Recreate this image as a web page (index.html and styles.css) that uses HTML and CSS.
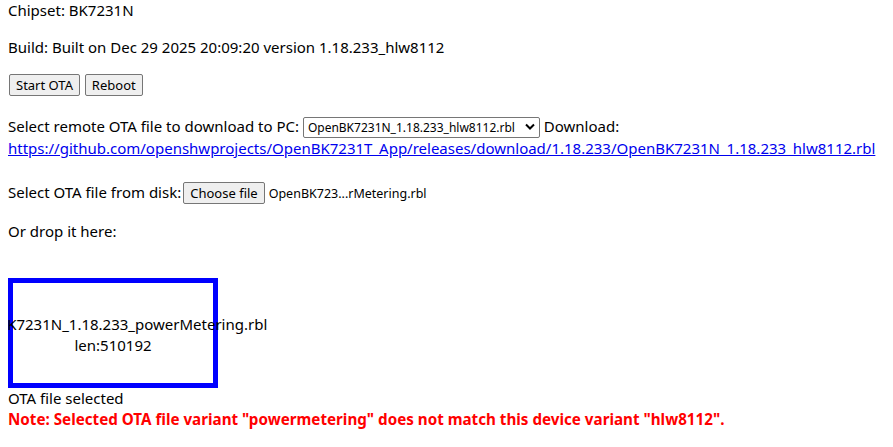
FILE: index.html
```html
<!DOCTYPE html>
<html lang="en">
<head>
    <meta charset="UTF-8">
    <meta name="viewport" content="width=device-width, initial-scale=1.0">
    <title>OTA</title>
    <link rel="stylesheet" href="styles.css">
</head>
<body>
    <div class="main">
        <p class="first">Chipset: BK7231N</p>
        <p>Build: Built on Dec 29 2025 20:09:20 version 1.18.233_hlw8112</p>
        <p class="buttons">
            <button class="btn">Start OTA</button>
            <button class="btn">Reboot</button>
        </p>

        <!-- remote file list -->
        <p class="remote">
            Select remote OTA file to download to PC:
            <span class="select-wrap">
                <select class="ota-select">
                    <option>OpenBK7231N_1.18.233_hlw8112.rbl</option>
                </select>
                <svg class="chevron" width="10" height="7" viewBox="0 0 10 7"><path d="M1 1.5 L5 5.5 L9 1.5" fill="none" stroke="#000" stroke-width="2"/></svg>
            </span>
            Download:<br>
            <a href="#" class="ota-link">https://github.com/openshwprojects/OpenBK7231T_App/releases/download/1.18.233/OpenBK7231N_1.18.233_hlw8112.rbl</a>
        </p>

        <p class="disk">Select OTA file from disk:<button class="btn file-btn">Choose file</button><span class="file-name">OpenBK723...rMetering.rbl</span></p>
        <p class="drop-label">Or drop it here:</p>

        <div class="drop-zone">
            <div class="drop-line">OpenBK7231N_1.18.233_powerMetering.rbl</div>
            <div class="drop-line">len:510192</div>
        </div>
        <div class="status">OTA file selected</div>
        <div class="note">Note: Selected OTA file variant "powermetering" does not match this device variant "hlw8112".</div>
    </div>
</body>
</html>
```

FILE: styles.css
```css
body {
    margin: 0 8px;
    font-family: 'Noto Sans', 'Open Sans', sans-serif;
    font-size: 15px;
    line-height: 21px;
    color: #000;
    background: #fff;
}

p {
    margin: 16px 0;
}

p.first {
    margin-top: 0;
}

.btn {
    font-family: 'Noto Sans', sans-serif;
    font-size: 13px;
    line-height: 16px;
    padding: 2px 6px;
    background-color: #efefef;
    border: 1px solid #767676;
    border-radius: 2px;
    color: #000;
}

.buttons .btn {
    margin: 0 0 0 1px;
}

.remote {
    margin-top: 20px;
}

.select-wrap {
    position: relative;
    display: inline-block;
}

.ota-select {
    -webkit-appearance: none;
    appearance: none;
    font-family: 'Noto Sans', sans-serif;
    font-size: 12px;
    height: 21px;
    width: 237px;
    padding: 0 16px 0 4px;
    border: 1px solid #767676;
    border-radius: 2px;
    background: #fff;
    color: #000;
}

/* arrow drawn over the select */
.chevron {
    position: absolute;
    right: 5px;
    top: 7px;
    pointer-events: none;
}

.ota-link {
    color: #0000ee;
}

.disk {
    margin-top: 22px;
    line-height: 22px;
}

.file-btn {
    margin: 0 4px 0 2px;
}

.file-name {
    font-size: 12.5px;
}

.drop-label {
    margin-top: 16px;
}

.drop-zone {
    width: 200px;
    height: 96px;
    padding-top: 4px;
    border: 5px solid #0000ff;
    margin-top: 36px;
    display: flex;
    flex-direction: column;
    justify-content: center;
    align-items: center;
}

.drop-line {
    white-space: nowrap;
}

.note {
    color: #ff0000;
    font-weight: bold;
    font-size: 15.2px;
}
```
